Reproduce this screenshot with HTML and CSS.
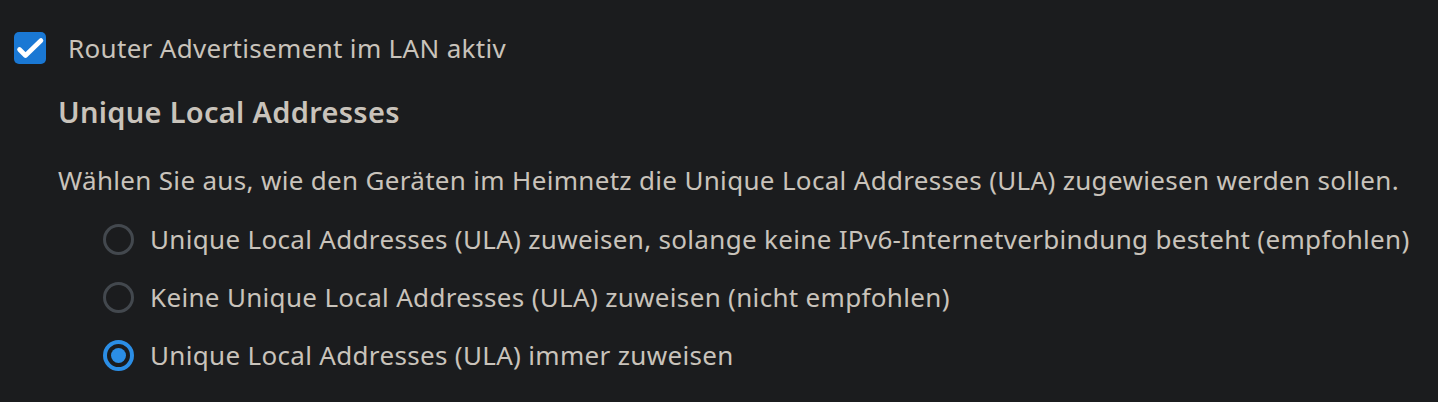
FILE: index.html
```html
<!DOCTYPE html>
<html lang="de">
<head>
<meta charset="utf-8">
<title>ULA</title>
<link rel="stylesheet" href="styles.css">
</head>
<body>
<div class="panel">
  <label class="check-row">
    <span class="checkbox">
      <svg viewBox="0 0 32 32" width="32" height="32"><path d="M5.5 17.5l6 6L27 8.5" fill="none" stroke="#fff" stroke-width="4.6" stroke-linecap="round" stroke-linejoin="round"/></svg>
    </span>
    <span class="label-text">Router Advertisement im LAN aktiv</span>
  </label>
  <div class="section">
    <h3 class="heading">Unique Local Addresses</h3>
    <p class="desc">Wählen Sie aus, wie den Geräten im Heimnetz die Unique Local Addresses (ULA) zugewiesen werden sollen.</p>
    <div class="options">
      <label class="radio-row"><span class="radio"></span><span class="label-text">Unique Local Addresses (ULA) zuweisen, solange keine IPv6-Internetverbindung besteht (empfohlen)</span></label>
      <label class="radio-row"><span class="radio"></span><span class="label-text">Keine Unique Local Addresses (ULA) zuweisen (nicht empfohlen)</span></label>
      <label class="radio-row"><span class="radio checked"></span><span class="label-text">Unique Local Addresses (ULA) immer zuweisen</span></label>
    </div>
  </div>
</div>
</body>
</html>
```

FILE: styles.css
```css
html, body {
  margin: 0;
  padding: 0;
  background: #1b1c1e;
}
body {
  font-family: "Noto Sans", "Open Sans", sans-serif;
  color: #c9c3bb;
  font-size: 26px;
  letter-spacing: 0.32px;
}
.panel {
  padding: 32px 0 0 14px;
}
.check-row {
  display: flex;
  align-items: center;
  height: 32px;
  gap: 22px;
}
.checkbox {
  width: 32px;
  height: 32px;
  border-radius: 5px;
  background: #1a78d4;
  display: flex;
  flex-shrink: 0;
}
.label-text {
  line-height: 32px;
  white-space: nowrap;
}
.section {
  padding-left: 44px;
}
.heading {
  margin: 28px 0 0;
  font-size: 29px;
  font-weight: 600;
  letter-spacing: 0.3px;
  line-height: 40px;
  height: 40px;
}
.desc {
  margin: 30px 0 0;
  line-height: 36px;
  height: 36px;
  white-space: nowrap;
}
.options {
  margin-top: 12px;
  padding-left: 45px;
  display: flex;
  flex-direction: column;
}
.radio-row {
  display: flex;
  align-items: center;
  height: 58px;
  gap: 16px;
}
.radio {
  width: 31px;
  height: 31px;
  box-sizing: border-box;
  border: 3px solid #43484e;
  border-radius: 50%;
  flex-shrink: 0;
  display: flex;
  align-items: center;
  justify-content: center;
}
.radio.checked {
  border: 4px solid #2b8ee6;
}
.radio.checked::after {
  content: "";
  width: 15px;
  height: 15px;
  border-radius: 50%;
  background: #2b8ee6;
}
```
